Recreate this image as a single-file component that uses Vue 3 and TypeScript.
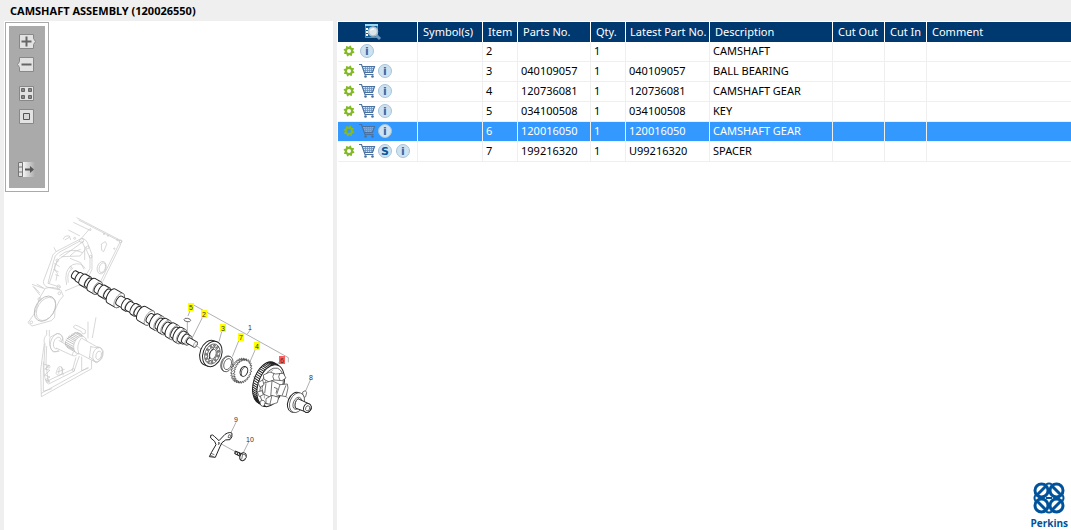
<script setup lang="ts">
import { ref } from 'vue'

interface Part {
  item: string
  partNo: string
  qty: string
  latest: string
  description: string
  cart: boolean
  supersession: boolean
}

const parts: Part[] = [
  { item: '2', partNo: '', qty: '1', latest: '', description: 'CAMSHAFT', cart: false, supersession: false },
  { item: '3', partNo: '040109057', qty: '1', latest: '040109057', description: 'BALL BEARING', cart: true, supersession: false },
  { item: '4', partNo: '120736081', qty: '1', latest: '120736081', description: 'CAMSHAFT GEAR', cart: true, supersession: false },
  { item: '5', partNo: '034100508', qty: '1', latest: '034100508', description: 'KEY', cart: true, supersession: false },
  { item: '6', partNo: '120016050', qty: '1', latest: '120016050', description: 'CAMSHAFT GEAR', cart: true, supersession: false },
  { item: '7', partNo: '199216320', qty: '1', latest: 'U99216320', description: 'SPACER', cart: true, supersession: true },
]

const selected = ref('6')

// Shaft journals and lobes: start, end and radius along the shaft axis
const lobes: [number, number, number][] = [
  [-1, 4, 4], [4, 9, 5], [9, 15, 6], [15, 19, 5], [19, 26, 7], [26, 31, 5], [31, 37, 6], [37, 42, 5],
  [42, 51, 8], [51, 58, 5], [58, 62, 6], [62, 68, 5], [68, 72, 6], [72, 77, 5], [77, 86, 8],
  [86, 92, 5], [92, 97, 8], [97, 101, 6], [101, 105, 8], [105, 110, 6],
  [110, 115, 8], [115, 119, 6], [119, 123, 8], [123, 127, 6], [127, 131, 5], [131, 139, 3],
]

function cylinder(a: number, b: number, r: number): string {
  const w = r * 0.5
  return `M${a} ${-r}L${b} ${-r}A${w} ${r} 0 0 1 ${b} ${r}L${a} ${r}A${w} ${r} 0 0 1 ${a} ${-r}Z`
}

function gearPath(rx: number, ry: number, teeth: number, depth: number): string {
  const pts: string[] = []
  for (let i = 0; i < teeth * 4; i++) {
    const a = (i / (teeth * 4)) * Math.PI * 2
    const k = i % 4 < 2 ? 1 : 1 - depth
    pts.push(`${(Math.cos(a) * rx * k).toFixed(2)} ${(Math.sin(a) * ry * k).toFixed(2)}`)
  }
  return 'M' + pts.join('L') + 'Z'
}

const cog = gearPath(5.5, 5.5, 8, 0.22)
const smallGear = gearPath(26, 38, 26, 0.14)

const rimTeeth = Array.from({ length: 34 }, (_, i) => {
  const a = ((80 + i * 6) * Math.PI) / 180
  const x = Math.cos(a) * 38
  const y = Math.sin(a) * 65
  return `M${x.toFixed(1)} ${y.toFixed(1)}l-15 -4`
}).join('')

const balls = Array.from({ length: 11 }, (_, i) => {
  const a = (i / 11) * Math.PI * 2
  return { x: Math.cos(a) * 18, y: Math.sin(a) * 26 }
})

const callouts = [
  { n: '5', x: 191, y: 307 },
  { n: '2', x: 204, y: 314 },
  { n: '3', x: 223, y: 328 },
  { n: '7', x: 241, y: 337 },
  { n: '4', x: 257, y: 346 },
  { n: '6', x: 282, y: 360 },
]
</script>

<template>
  <div class="page">
    <h1 class="title">CAMSHAFT ASSEMBLY (120026550)</h1>
    <div class="panes">
      <section class="drawing-pane" aria-label="Drawing">
        <div class="toolbar">
          <div class="toolbar-inner">
            <button type="button" aria-label="Zoom in">
              <svg viewBox="0 0 19 15"><path class="tile" d="M2.5 .5h14v4l2 3-2 3v4h-14z" /><path class="ink" d="M4.500 7.500h10M9.500 2.500v10" /></svg>
            </button>
            <button type="button" aria-label="Zoom out">
              <svg viewBox="0 0 19 15"><path class="tile" d="M2.500 .5h14v14h-14v-4l-2-3 2-3z" /><path class="ink" d="M4.500 7.500h10" /></svg>
            </button>
            <button type="button" class="spaced" aria-label="Show all">
              <svg viewBox="0 0 19 15"><path class="tile" d="M2.500 .5h14v14h-14z" /><path class="boxes" d="M4.500 2.500h3v3h-3zM11.500 2.500h3v3h-3zM4.500 9.500h3v3h-3zM11.500 9.500h3v3h-3z" /></svg>
            </button>
            <button type="button" aria-label="Fit drawing">
              <svg viewBox="0 0 19 15"><path class="tile" d="M2.500 .5h14v14h-14z" /><path d="M6.500 4.500h6v6h-6z" fill="#d8d8d8" stroke="#555" /></svg>
            </button>
            <button type="button" class="far" aria-label="Toggle list">
              <svg viewBox="0 0 19 15">
                <defs><linearGradient id="fade"><stop offset="0" stop-color="#f4f4f4" /><stop offset="1" stop-color="#aaa" /></linearGradient></defs>
                <path d="M6 0h12v15H6z" fill="url(#fade)" />
                <path d="M1.500 .5h4v14h-4zM1.500 5h4M1.500 10h4" fill="#e4e4e4" stroke="#777" />
                <path d="M8 7.500h6" stroke="#555" stroke-width="2" /><path d="M13 4l4 3.500-4 3.500z" fill="#555" />
              </svg>
            </button>
          </div>
        </div>

        <svg class="drawing" viewBox="4 200 329 280" role="img" aria-label="Camshaft assembly exploded view">
          <!-- timing case -->
          <g transform="translate(20 210) scale(.3333)" class="faint">
            <path d="M170 23L305 93 300 108 248 215M176 30L300 94M160 37L212 62Q214 50 206 60L185 84M145 60L180 78M130 88Q132 76 148 78L152 90M134 90l14-8M300 96l-60 122" />
            <path d="M185 85L108 125Q96 132 94 150L70 214Q70 228 84 232L120 240M180 93L116 128Q103 136 101 153L84 220 122 232M188 96L112 151 88 220M185 85Q199 86 205 105L216 134V178Q206 206 180 224L135 243M195 110L210 144V176Q198 202 174 216M185 92L194 112V150M108 125L102 112" />
            <path d="M118 138Q150 110 188 128M125 140L180 138 196 118M150 138Q165 120 182 118M140 225Q130 180 158 164Q185 155 196 176M145 218Q138 184 160 174M150 145L182 158 192 178M112 155Q95 172 112 190L108 212M103 160l16 10M100 178l16 8M106 194l12 4" />
            <path d="M244 102l12-7 4 8-4 10-5 12-6-4z" />
            <ellipse cx="245" cy="173" rx="13" ry="19" transform="rotate(18 245 173)" /><ellipse cx="247" cy="173" rx="9" ry="15" transform="rotate(18 247 173)" />
            <circle cx="185" cy="92" r="6" /><circle cx="112" cy="151" r="4" /><circle cx="203" cy="112" r="4" /><circle cx="212" cy="140" r="4" /><circle cx="116" cy="230" r="5" /><circle cx="164" cy="85" r="3" /><circle cx="252" cy="72" r="2" /><circle cx="264" cy="77" r="2" /><circle cx="292" cy="90" r="2" /><circle cx="283" cy="116" r="2" /><circle cx="302" cy="94" r="4" /><circle cx="152" cy="172" r="3" />
            <path d="M36 223L70 235M42 230l18 20M50 222l24 14M38 228l22 28M76 235L60 262 44 310 24 338 36 348 94 332 104 322 105 300 118 272 130 258 122 240Q100 228 76 235" />
            <ellipse cx="75" cy="296" rx="28" ry="41" transform="rotate(32 75 296)" class="mid" /><ellipse cx="78" cy="297" rx="25" ry="38" transform="rotate(32 78 297)" />
            <circle cx="59" cy="268" r="5" /><circle cx="34" cy="337" r="4" /><circle cx="118" cy="250" r="4" />
          </g>
          <!-- cover and drive -->
          <g transform="translate(20 310) scale(.3333)" class="faint">
            <path d="M80 60V75Q70 82 73 100L66 150 62 180 64 260 215 176 214 130M70 155V244L96 236M64 250L205 172M75 100L72 160Q70 200 80 218L86 222 162 184 178 138M80 108L78 160 84 212 158 178 168 142M228 22L217 84M204 35V85M185 140V182L206 174M88 60V80M70 162l18 5-14 10 16 4-16 14 16 6-14 8 14 8" />
            <path d="M112 178q4-14 16-4l-2 18q-14 8-18-2zM112 186l22-8M118 173l-2 18M124 170l6 26" />
            <path d="M90 82L112 70Q130 74 128 92M90 82Q84 110 100 126L118 124" /><ellipse cx="110" cy="98" rx="18" ry="28" transform="rotate(18 110 98)" /><ellipse cx="112" cy="99" rx="11" ry="18" transform="rotate(18 112 99)" />
            <path d="M116 91L175 126Q170 142 156 136L108 114M175 126q-16-8-18 9" fill="#fff" />
            <path d="M160 50q6-8 14-2l22 12v10l-8 2q-2-10-14-12l-14-8" />
            <path d="M140 88L166 68Q186 66 194 90M136 94Q134 112 152 118L176 132M140 84l24 14M144 80l24 14M148 77l24 14M153 74l23 13M158 71l22 13M164 68l20 12M171 68l16 10M137 90l25 13M136 96l25 14M137 102l26 15M141 109l26 14" class="mid" />
            <ellipse cx="181" cy="105" rx="19" ry="27" transform="rotate(20 181 105)" fill="#fff" />
            <path d="M184 84L230 110Q244 110 250 124Q250 150 230 158L176 130Q168 106 184 84M213 108L208 145M211 110l26 4M209 140l20 18" fill="#fff" />
            <ellipse cx="233" cy="134" rx="14" ry="22" transform="rotate(16 233 134)" /><ellipse cx="236" cy="136" rx="8" ry="13" transform="rotate(16 236 136)" />
            <circle cx="84" cy="213" r="4" /><circle cx="86" cy="170" r="4" /><circle cx="160" cy="180" r="4" />
          </g>
          <!-- camshaft -->
          <g transform="translate(75 275) rotate(30)" class="shaft">
            <g v-for="l in lobes" :key="l[0]">
              <path :d="cylinder(l[0], l[1], l[2])" />
              <ellipse :cx="l[1]" cy="0" :rx="l[2] * 0.5" :ry="l[2]" class="face" />
            </g>
          </g>
          <!-- gear train -->
          <g transform="translate(170 290) scale(.3333)">
            <path class="thin" d="M62 40L355 203V217M242 118L232 132M62 57L54 78M52 96V128M99 79L68 141M157 118L147 155M208 148L187 200M257 176L240 215M328 216L314 232M422 268L404 310M76 165L94 178M340 315L356 326M250 260l14 8" />
            <ellipse cx="52" cy="90" rx="10" ry="5" transform="rotate(10 52 90)" class="dark" />
            <g class="dark" transform="translate(127 192) rotate(20)">
              <path d="M-10 -39L0 -39V39H-10A27 39 0 0 1 -10 -39Z" class="bold" /><ellipse rx="28" ry="39" class="bold" /><ellipse rx="22" ry="31" /><ellipse rx="14" ry="21" />
              <circle v-for="(b, i) in balls" :key="i" :cx="b.x" :cy="b.y" r="3" class="ball" /><path d="M-2 -17Q-14 0-2 17" class="bold" /><ellipse cx="2" rx="9" ry="15" />
            </g>
            <g class="dark" transform="translate(172 222) rotate(20)"><ellipse cx="-3" rx="16" ry="24" /><ellipse rx="16" ry="24" /><ellipse cx="1" rx="11" ry="17" /></g>
            <g class="dark" transform="translate(218 243) rotate(20)">
              <path :d="smallGear" transform="translate(-8 1)" /><path :d="smallGear" /><ellipse cx="4" rx="11" ry="15" class="bold" /><path d="M2 -14Q-8 0 2 14" />
            </g>
            <g class="dark" transform="translate(302 287) rotate(18)">
              <path d="M-15 -69L0 -65V65L-15 61A38 65 0 0 1 -15 -69Z" class="bold" /><ellipse rx="38" ry="65" class="bold" />
              <path :d="rimTeeth" class="bold" /><ellipse cx="3" rx="32" ry="56" />
              <path d="M-8 -48Q-24 -20-16 16L-6 42" class="thin" />
            </g>
            <g class="dark">
              <path d="M280 255L300 246 316 252 340 250 348 264 336 272 312 270 298 276 282 268ZM312 250Q305 260 312 270M330 249q-8 12 0 22" />
              <path d="M280 280L306 272 330 284 352 282 354 294 348 320 326 316 306 324 280 312 276 295ZM306 272L302 322M330 284L320 314M348 286L336 317M288 280L284 310M312 292l10 4-4 14" />
              <path d="M288 326L306 316 326 322 322 338 304 344 288 340ZM306 316L300 342M264 278l14-8 4 14-12 8zM262 306l14-4 4 12-12 6zM270 334q10-8 16 2l-4 12q-12 4-12-14" />
            </g>
            <g class="dark">
              <path d="M398 306l8-4 4 6-3 12-8 4z" /><ellipse cx="375" cy="337" rx="21" ry="31" transform="rotate(22 375 337)" class="bold" /><ellipse cx="381" cy="338" rx="21" ry="31" transform="rotate(22 381 338)" />
              <ellipse cx="382" cy="340" rx="12" ry="19" transform="rotate(22 382 340)" /><path d="M384 326L416 341Q426 346 424 357Q418 370 408 366L376 354Q372 336 384 326Z" class="bold" />
              <ellipse cx="412" cy="354" rx="11" ry="14" transform="rotate(22 412 354)" class="bold" /><ellipse cx="413" cy="355" rx="6" ry="8" transform="rotate(22 413 355)" />
            </g>
          </g>
          <!-- retainer and bolt -->
          <g transform="translate(190 400) scale(.3333)">
            <path class="thin" d="M138 67L121 102M177 124L160 158M94 132L138 156" />
            <path class="dark bold" d="M62 106Q68 102 74 110L87 122 105 103Q120 94 126 100Q128 112 120 119Q106 116 96 128L90 140 76 172 58 170 64 158 78 134 74 124 62 114Z" />
            <path class="dark" d="M117 104l6 2-3 8-6-2zM63 160l10 4M61 166l10 4M86 126l4 4-5 4z" />
            <path class="dark bold" d="M136 153L152 160 150 169 134 161ZM139 153l-2 8M144 156l-2 9M149 158l-2 9" /><ellipse class="dark bold" cx="159" cy="170" rx="9" ry="12" transform="rotate(20 159 170)" /><path class="dark" d="M153 162l12 2 4 8-8 8M158 163l-3 15" />
          </g>
          <g class="numbers">
            <g v-for="c in callouts" :key="c.n">
              <rect :x="c.x - 3" :y="c.y - 4" width="6" height="8" :fill="selected === c.n ? '#ff5c5c' : '#ffff00'" />
              <text :x="c.x" :y="c.y + 3">{{ c.n }}</text>
            </g>
            <text x="250" y="330">1</text><text x="311" y="380">8</text><text x="236" y="422">9</text><text x="250" y="442">10</text>
          </g>
        </svg>
      </section>

      <main class="list-pane">
        <table>
          <colgroup>
            <col class="c-actions"><col class="c-symbols"><col class="c-item"><col class="c-part"><col class="c-qty"><col class="c-latest"><col class="c-desc"><col class="c-out"><col class="c-in"><col>
          </colgroup>
          <thead>
            <tr>
              <th class="tools">
                <button type="button" aria-label="Search list">
                  <svg width="18" height="18" viewBox="0 0 18 18">
                    <path d="M1.500 1.500h12v13h-12z" fill="#0c5c93" stroke="#3a9dcc" /><path d="M1 2h13" stroke="#9bd8ef" stroke-width="2" /><path d="M3 5v9" stroke="#fff" stroke-width="2" stroke-dasharray="2 1" />
                    <path d="M12 12l4 4" stroke="#6b9cc6" stroke-width="3" /><circle cx="9" cy="8.500" r="4.500" fill="#dce5e9" stroke="#aebfc9" stroke-width="1.500" /><path d="M6.500 8q1-2.500 3.500-2" fill="none" stroke="#fff" />
                  </svg>
                </button>
              </th>
              <th>Symbol(s)</th><th>Item</th><th>Parts No.</th><th>Qty.</th><th class="tight">Latest Part No.</th><th>Description</th><th>Cut Out</th><th>Cut In</th><th>Comment</th>
            </tr>
          </thead>
          <tbody>
            <tr v-for="p in parts" :key="p.item" :class="{ selected: p.item === selected }" @click="selected = p.item">
              <td class="actions">
                <div class="icons">
                  <button type="button" aria-label="Options">
                    <svg viewBox="-9 -9 18 18"><path :d="cog" transform="rotate(11)" class="cog" /><circle r="2" class="hub" /></svg>
                  </button>
                  <button v-if="p.cart" type="button" aria-label="Add to cart">
                    <svg viewBox="0 0 18 18" :class="{ muted: p.item === selected }">
                      <path d="M4 4h13L14.500 10.500h-8z" class="basket" /><path d="M5 6.500h11M6 8.500h10M7.500 4v6M9.500 4v6M11.500 4v6M13.500 4v6" class="mesh" /><path d="M1 2.500h2.500L7 12.500h8.500M4 4.500h12.500L14.500 10.500h-8" class="wire" />
                      <circle cx="7.500" cy="14.500" r="1.300" class="wheel" /><circle cx="14.500" cy="14.500" r="1.300" class="wheel" />
                    </svg>
                  </button>
                  <button v-if="p.supersession" type="button" aria-label="Supersession">
                    <svg viewBox="0 0 18 18"><circle cx="9" cy="9" r="6.500" class="disc" /><text x="9" y="13" class="letter s">S</text></svg>
                  </button>
                  <button type="button" aria-label="Information">
                    <svg viewBox="0 0 18 18"><circle cx="9" cy="9" r="6.500" class="disc" /><text x="9" y="13" class="letter">i</text></svg>
                  </button>
                </div>
              </td>
              <td></td><td>{{ p.item }}</td><td>{{ p.partNo }}</td><td>{{ p.qty }}</td><td>{{ p.latest }}</td><td>{{ p.description }}</td><td></td><td></td><td></td>
            </tr>
          </tbody>
        </table>
        <div class="brand">
          <svg width="34" height="34" viewBox="0 0 34 34" aria-hidden="true">
            <g fill="none" stroke="#00539b" stroke-width="3">
              <circle cx="9.500" cy="9.500" r="6.500" /><circle cx="24.500" cy="9.500" r="6.500" /><circle cx="9.500" cy="24.500" r="6.500" /><circle cx="24.500" cy="24.500" r="6.500" />
              <path d="M5 14l9-9M29 14l-9-9M5 20l9 9M29 20l-9 9" /><path d="M14 3.500q3-2 6 0M14 30.500q3 2 6 0M3.500 14q-2 3 0 6M30.500 14q2 3 0 6M14 17h6" stroke-width="2" />
            </g>
          </svg>
          <span>Perkins</span>
        </div>
      </main>
    </div>
  </div>
</template>

<style>
body { margin: 0; background: #efefef; }
</style>

<style scoped>
.page { display: flex; flex-direction: column; min-height: 100vh; background: #efefef; color: #000; font: 11px/17px "Noto Sans", "Open Sans", sans-serif; }
.title { margin: 0; padding: 1px 10px; font-size: 11px; line-height: 19px; font-weight: 700; }
.panes { display: flex; flex: 1; gap: 4px; padding-left: 4px; }
.drawing-pane { flex: 0 0 329px; box-sizing: border-box; background: #fff; padding: 1px 0 0; }
button { display: block; border: 0; padding: 0; background: none; cursor: pointer; }
.toolbar { width: fit-content; margin-left: 1px; padding: 3px; border: 1px solid #aaa; }
.toolbar-inner { display: flex; flex-direction: column; align-items: center; gap: 8px; padding: 8px 9px 11px 8px; background: #aaa; }
.toolbar button svg { display: block; width: 19px; height: 15px; }
.toolbar .spaced { margin-top: 6px; }
.toolbar .far { margin-top: 30px; }
.tile { fill: #e2e2e2; stroke: #888; }
.ink { stroke: #666; stroke-width: 2; }
.boxes { fill: #888; stroke: #666; }
.drawing { display: block; width: 100%; margin-top: 8px; }
.faint { fill: none; stroke: #c4c4c4; stroke-width: 2; }
.mid { stroke: #a8a8a8; }
.shaft { fill: #fff; stroke: #222; stroke-width: 1; }
.face { stroke: #777; stroke-width: .6; }
.dark { fill: #fff; stroke: #333; stroke-width: 2; }
.bold { stroke: #222; stroke-width: 3; }
.ball { fill: #999; stroke: #555; }
.thin { fill: none; stroke: #888; stroke-width: 2; }
.numbers { font: 7px "Liberation Sans", sans-serif; text-anchor: middle; fill: #333; }
.list-pane { display: flex; flex-direction: column; flex: 1; min-width: 0; padding: 1px 0 0 1px; background: #fff; }
table { width: 100%; table-layout: fixed; border-collapse: separate; border-spacing: 0; }
.c-actions { width: 80px; }
.c-symbols { width: 65px; }
.c-item, .c-qty { width: 35px; }
.c-part { width: 73px; }
.c-latest { width: 84px; }
.c-desc { width: 123px; }
.c-out { width: 52px; }
.c-in { width: 42px; }
th { height: 18px; padding: 0 0 2px 5px; background: #003870; color: #fff; font-weight: 400; text-align: left; white-space: nowrap; border-right: 1px solid #fff; }
td { height: 17px; padding: 0 0 2px 3px; white-space: nowrap; border-right: 1px solid #efefef; border-bottom: 1px solid #efefef; }
th:last-child, td:last-child { border-right: 0; }
th.tight { padding-left: 4px; }
th.tools { padding: 0 9px 0 0; }
.tools button { margin: 0 auto; }
.tools svg { display: block; }
td.actions { padding: 0 0 1px 2px; }
.icons { display: flex; }
.icons svg { display: block; width: 18px; height: 18px; }
.selected td { background: #39f; color: #fff; }
.basket { fill: #d3e1f0; stroke: none; }
.wire { fill: none; stroke: #4a719f; stroke-width: 1.2; }
.mesh { fill: none; stroke: #6a93c2; stroke-width: .8; }
.wheel { fill: #4a719f; }
.muted .basket { fill: #75aee5; }
.cog { fill: #84b926; }
.hub { fill: #fff; }
.selected .hub { fill: #39f; }
.disc { fill: #cfe2f0; stroke: #a6c4da; }
.letter { font: 700 11px "DejaVu Sans", sans-serif; fill: #3568a4; text-anchor: middle; }
.s { fill: #07589a; }
.brand { display: flex; flex-direction: column; align-items: center; align-self: flex-end; gap: 2px; margin-top: auto; padding-right: 3px; color: #00539b; font: 700 10px/13px "Open Sans", sans-serif; }
.brand svg { display: block; }
</style>
